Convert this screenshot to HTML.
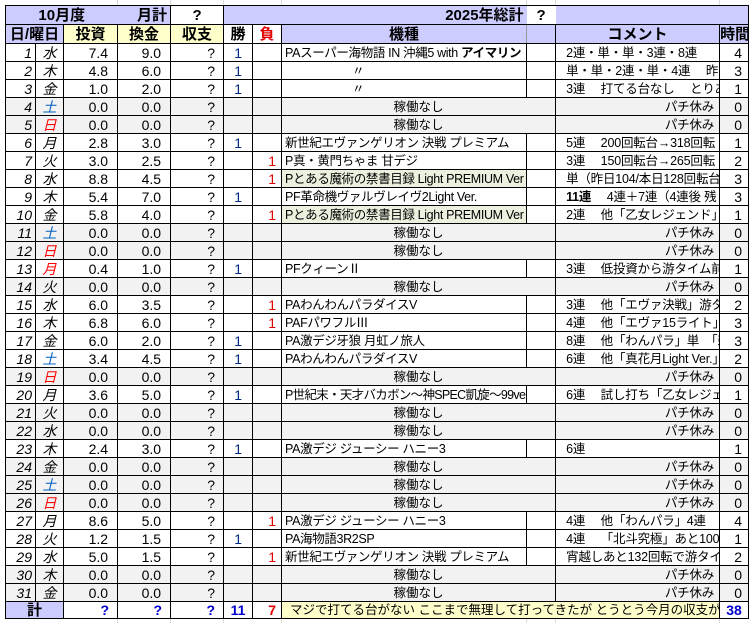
<!DOCTYPE html>
<html><head><meta charset="utf-8">
<style>
html,body{margin:0;padding:0;background:#fff;width:755px;height:623px;overflow:hidden;position:relative}
.g{position:absolute;top:0;width:1px;height:623px;background:#dadada}
table{position:absolute;left:5px;top:5px;border-collapse:collapse;table-layout:fixed;width:744px;
font-family:"Liberation Sans","Noto Sans CJK JP",sans-serif;font-size:12.5px;color:#000}
td{border:1px solid #000;padding:0 3px;white-space:nowrap;overflow:hidden;line-height:16px;height:16px}
tr{height:18px}
.h td{font-weight:bold;font-size:15px;text-align:center;height:17px;line-height:17px}
.bl{background:#ccccff}.ye{background:#ffffcc}.gr td{background:#f2f2f2}.gn{background:#ebf1de}
.d{text-align:right;font-style:italic;font-size:14px}
.w{text-align:center;font-style:italic;font-size:14px}
.n{text-align:right;padding-right:9px;font-size:14px}
.q{text-align:right;padding-right:8px;font-size:14px}
.win{color:#002b80;text-align:right;padding-right:10px;font-size:14px}
.lo{color:#e00000;text-align:right;padding-right:5px;font-size:14px}
.m{letter-spacing:-0.35px}
.c{padding-left:10px;letter-spacing:-0.2px}
.t{text-align:right;padding-right:6px;font-size:14px}
.sa{color:#0060c0}.su{color:#ff0000}
.gr .m{text-align:center;letter-spacing:0}
.gr .c{text-align:right;padding-right:5px}
.tot td{font-weight:bold;color:#0000cc;font-size:14px;height:15px;line-height:15px}
</style></head><body>
<div class="g" style="left:526px"></div><div class="g" style="left:555px"></div><div class="g" style="left:719px"></div><div class="g" style="left:117px"></div><div class="g" style="left:170px"></div><div class="g" style="left:223px"></div><div class="g" style="left:281px"></div>
<table>
<colgroup><col style="width:30px"><col style="width:28px"><col style="width:54px"><col style="width:53px"><col style="width:53px"><col style="width:29px"><col style="width:29px"><col style="width:245px"><col style="width:29px"><col style="width:164px"><col style="width:29px"></colgroup>
<tr class="h" style="height:19px"><td colspan="3" class="bl" style="border-right:none">10月度</td><td class="bl" style="border-left:none;text-align:right">月計</td><td style="background:#fff">?</td><td colspan="3" class="bl" style="text-align:right;border-right:none">2025年総計</td><td style="background:#fff;border-left:none;border-right:none">?</td><td colspan="2" class="bl" style="border-left:none"></td></tr>
<tr class="h" style="height:19px"><td colspan="2" class="bl">日/曜日</td><td class="ye">投資</td><td class="ye">換金</td><td class="ye">収支</td><td>勝</td><td style="color:#e00000">負</td><td class="bl" style="border-right:1px solid #999">機種</td><td class="bl"></td><td class="bl">コメント</td><td class="bl" style="padding:0">時間</td></tr>
<tr><td class="d">1</td><td class="w">水</td><td class="n">7.4</td><td class="n">9.0</td><td class="q">?</td><td class="win">1</td><td></td><td class="m">PAスーパー海物語 IN 沖縄5 with <b>アイマリン</b></td><td></td><td class="c">2連・単・単・3連・8連　　1台目</td><td class="t">4</td></tr>
<tr><td class="d">2</td><td class="w">木</td><td class="n">4.8</td><td class="n">6.0</td><td class="q">?</td><td class="win">1</td><td></td><td style="padding-left:70px">〃</td><td></td><td class="c">単・単・2連・単・4連　 昨日の台</td><td class="t">3</td></tr>
<tr><td class="d">3</td><td class="w">金</td><td class="n">1.0</td><td class="n">2.0</td><td class="q">?</td><td class="win">1</td><td></td><td style="padding-left:70px">〃</td><td></td><td class="c">3連　 打てる台なし　 とりあえず</td><td class="t">1</td></tr>
<tr class="gr"><td class="d">4</td><td class="w sa">土</td><td class="n">0.0</td><td class="n">0.0</td><td class="q">?</td><td></td><td></td><td colspan="2" class="m">稼働なし</td><td class="c">パチ休み</td><td class="t">0</td></tr>
<tr class="gr"><td class="d">5</td><td class="w su">日</td><td class="n">0.0</td><td class="n">0.0</td><td class="q">?</td><td></td><td></td><td colspan="2" class="m">稼働なし</td><td class="c">パチ休み</td><td class="t">0</td></tr>
<tr><td class="d">6</td><td class="w">月</td><td class="n">2.8</td><td class="n">3.0</td><td class="q">?</td><td class="win">1</td><td></td><td class="m">新世紀エヴァンゲリオン  決戦  プレミアム</td><td></td><td class="c">5連　 200回転台→318回転</td><td class="t">1</td></tr>
<tr><td class="d">7</td><td class="w">火</td><td class="n">3.0</td><td class="n">2.5</td><td class="q">?</td><td></td><td class="lo">1</td><td class="m">P真・黄門ちゃま  甘デジ</td><td></td><td class="c">3連　 150回転台→265回転</td><td class="t">2</td></tr>
<tr><td class="d">8</td><td class="w">水</td><td class="n">8.8</td><td class="n">4.5</td><td class="q">?</td><td></td><td class="lo">1</td><td class="gn m">Pとある魔術の禁書目録 Light PREMIUM Ver</td><td></td><td class="c">単（昨日104/本日128回転台</td><td class="t">3</td></tr>
<tr><td class="d">9</td><td class="w">木</td><td class="n">5.4</td><td class="n">7.0</td><td class="q">?</td><td class="win">1</td><td></td><td class="m">PF革命機ヴァルヴレイヴ2Light Ver.</td><td></td><td class="c"><b>11連</b>　 4連＋7連（4連後 残</td><td class="t">3</td></tr>
<tr><td class="d">10</td><td class="w">金</td><td class="n">5.8</td><td class="n">4.0</td><td class="q">?</td><td></td><td class="lo">1</td><td class="gn m">Pとある魔術の禁書目録 Light PREMIUM Ver</td><td></td><td class="c">2連　 他「乙女レジェンド」5連</td><td class="t">1</td></tr>
<tr class="gr"><td class="d">11</td><td class="w sa">土</td><td class="n">0.0</td><td class="n">0.0</td><td class="q">?</td><td></td><td></td><td colspan="2" class="m">稼働なし</td><td class="c">パチ休み</td><td class="t">0</td></tr>
<tr class="gr"><td class="d">12</td><td class="w su">日</td><td class="n">0.0</td><td class="n">0.0</td><td class="q">?</td><td></td><td></td><td colspan="2" class="m">稼働なし</td><td class="c">パチ休み</td><td class="t">0</td></tr>
<tr><td class="d">13</td><td class="w su">月</td><td class="n">0.4</td><td class="n">1.0</td><td class="q">?</td><td class="win">1</td><td></td><td class="m">PFクィーンⅡ</td><td></td><td class="c">3連　 低投資から游タイム前に</td><td class="t">1</td></tr>
<tr class="gr"><td class="d">14</td><td class="w">火</td><td class="n">0.0</td><td class="n">0.0</td><td class="q">?</td><td></td><td></td><td colspan="2" class="m">稼働なし</td><td class="c">パチ休み</td><td class="t">0</td></tr>
<tr><td class="d">15</td><td class="w">水</td><td class="n">6.0</td><td class="n">3.5</td><td class="q">?</td><td></td><td class="lo">1</td><td class="m">PAわんわんパラダイスV</td><td></td><td class="c">3連　 他「エヴァ決戦」游タイム</td><td class="t">2</td></tr>
<tr><td class="d">16</td><td class="w">木</td><td class="n">6.8</td><td class="n">6.0</td><td class="q">?</td><td></td><td class="lo">1</td><td class="m">PAFパワフルⅢ</td><td></td><td class="c">4連　 他「エヴァ15ライト」単</td><td class="t">3</td></tr>
<tr><td class="d">17</td><td class="w">金</td><td class="n">6.0</td><td class="n">2.0</td><td class="q">?</td><td class="win">1</td><td></td><td class="m">PA激デジ牙狼 月虹ノ旅人</td><td></td><td class="c">8連　 他「わんパラ」単　「新台</td><td class="t">3</td></tr>
<tr><td class="d">18</td><td class="w sa">土</td><td class="n">3.4</td><td class="n">4.5</td><td class="q">?</td><td class="win">1</td><td></td><td class="m">PAわんわんパラダイスV</td><td></td><td class="c">6連　 他「真花月Light Ver.」3連</td><td class="t">2</td></tr>
<tr class="gr"><td class="d">19</td><td class="w su">日</td><td class="n">0.0</td><td class="n">0.0</td><td class="q">?</td><td></td><td></td><td colspan="2" class="m">稼働なし</td><td class="c">パチ休み</td><td class="t">0</td></tr>
<tr><td class="d">20</td><td class="w">月</td><td class="n">3.6</td><td class="n">5.0</td><td class="q">?</td><td class="win">1</td><td></td><td style="letter-spacing:-0.7px">P世紀末・天才バカボン～神SPEC凱旋～99ver.</td><td></td><td class="c">6連　 試し打ち「乙女レジェンド</td><td class="t">1</td></tr>
<tr class="gr"><td class="d">21</td><td class="w">火</td><td class="n">0.0</td><td class="n">0.0</td><td class="q">?</td><td></td><td></td><td colspan="2" class="m">稼働なし</td><td class="c">パチ休み</td><td class="t">0</td></tr>
<tr class="gr"><td class="d">22</td><td class="w">水</td><td class="n">0.0</td><td class="n">0.0</td><td class="q">?</td><td></td><td></td><td colspan="2" class="m">稼働なし</td><td class="c">パチ休み</td><td class="t">0</td></tr>
<tr><td class="d">23</td><td class="w">木</td><td class="n">2.4</td><td class="n">3.0</td><td class="q">?</td><td class="win">1</td><td></td><td class="m">PA激デジ ジューシー ハニー3</td><td></td><td class="c">6連</td><td class="t">1</td></tr>
<tr class="gr"><td class="d">24</td><td class="w">金</td><td class="n">0.0</td><td class="n">0.0</td><td class="q">?</td><td></td><td></td><td colspan="2" class="m">稼働なし</td><td class="c">パチ休み</td><td class="t">0</td></tr>
<tr class="gr"><td class="d">25</td><td class="w sa">土</td><td class="n">0.0</td><td class="n">0.0</td><td class="q">?</td><td></td><td></td><td colspan="2" class="m">稼働なし</td><td class="c">パチ休み</td><td class="t">0</td></tr>
<tr class="gr"><td class="d">26</td><td class="w su">日</td><td class="n">0.0</td><td class="n">0.0</td><td class="q">?</td><td></td><td></td><td colspan="2" class="m">稼働なし</td><td class="c">パチ休み</td><td class="t">0</td></tr>
<tr><td class="d">27</td><td class="w">月</td><td class="n">8.6</td><td class="n">5.0</td><td class="q">?</td><td></td><td class="lo">1</td><td class="m">PA激デジ ジューシー ハニー3</td><td></td><td class="c">4連　 他「わんパラ」4連　「札</td><td class="t">4</td></tr>
<tr><td class="d">28</td><td class="w">火</td><td class="n">1.2</td><td class="n">1.5</td><td class="q">?</td><td class="win">1</td><td></td><td class="m">PA海物語3R2SP</td><td></td><td class="c">4連　 「北斗究極」あと100回転</td><td class="t">1</td></tr>
<tr><td class="d">29</td><td class="w">水</td><td class="n">5.0</td><td class="n">1.5</td><td class="q">?</td><td></td><td class="lo">1</td><td class="m">新世紀エヴァンゲリオン  決戦  プレミアム</td><td></td><td class="c">宵越しあと132回転で游タイム</td><td class="t">2</td></tr>
<tr class="gr"><td class="d">30</td><td class="w">木</td><td class="n">0.0</td><td class="n">0.0</td><td class="q">?</td><td></td><td></td><td colspan="2" class="m">稼働なし</td><td class="c">パチ休み</td><td class="t">0</td></tr>
<tr class="gr"><td class="d">31</td><td class="w">金</td><td class="n">0.0</td><td class="n">0.0</td><td class="q">?</td><td></td><td></td><td colspan="2" class="m">稼働なし</td><td class="c">パチ休み</td><td class="t">0</td></tr>
<tr class="tot" style="height:17px"><td colspan="2" class="bl" style="color:#000;text-align:center;font-size:15px">計</td><td class="q">?</td><td class="q">?</td><td class="q">?</td><td style="text-align:center">11</td><td style="color:#e00000;text-align:right;padding-right:5px">7</td><td colspan="3" class="ye" style="color:#000;font-weight:normal;font-size:12.5px;padding-left:8px">マジで打てる台がない  ここまで無理して打ってきたが  とうとう今月の収支がマイナスに</td><td style="text-align:center;padding:0">38</td></tr>
</table>
</body></html>
